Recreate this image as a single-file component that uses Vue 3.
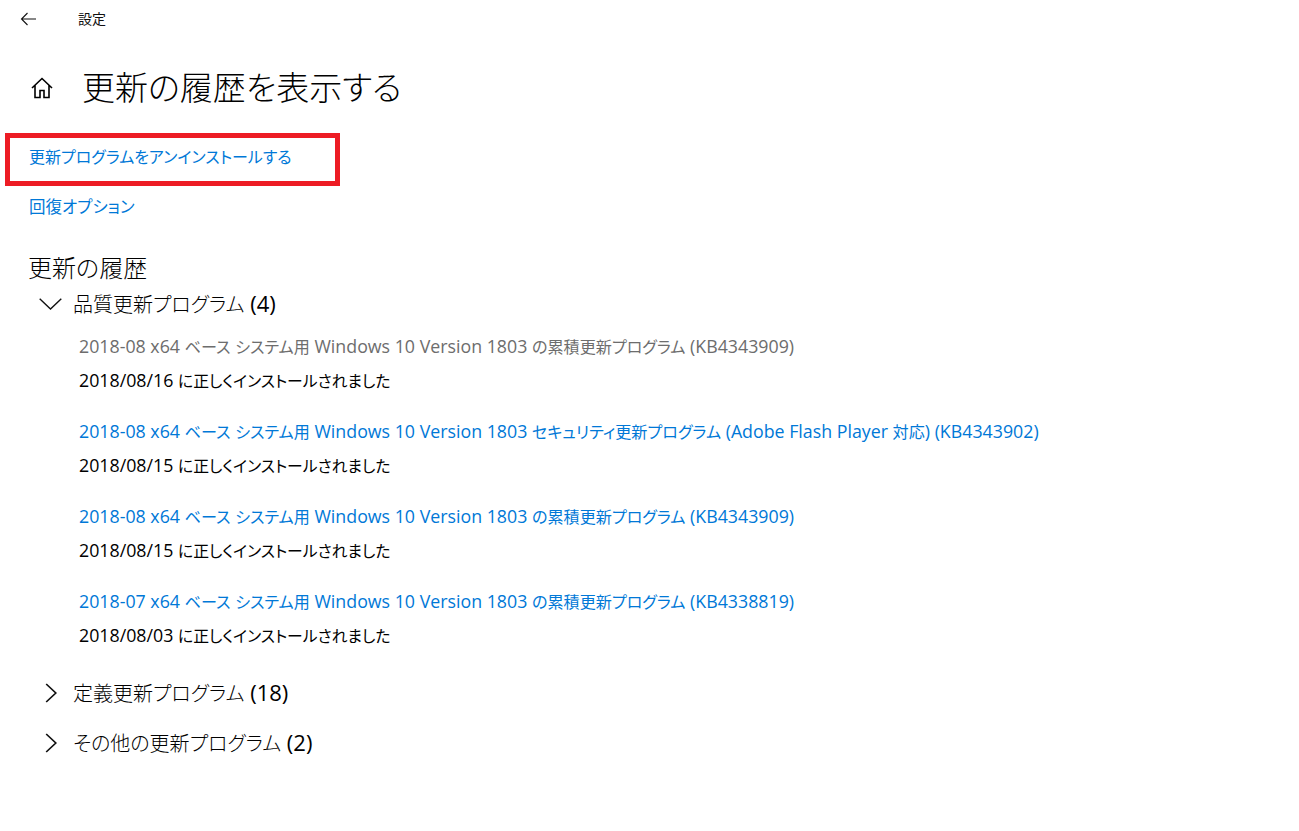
<script setup>
const groups = [
  {
    title: '品質更新プログラム (4)',
    open: true,
    items: [
      { name: '2018-08 x64 ベース システム用 Windows 10 Version 1803 の累積更新プログラム (KB4343909)', date: '2018/08/16 に正しくインストールされました', visited: true },
      { name: '2018-08 x64 ベース システム用 Windows 10 Version 1803 セキュリティ更新プログラム (Adobe Flash Player 対応) (KB4343902)', date: '2018/08/15 に正しくインストールされました' },
      { name: '2018-08 x64 ベース システム用 Windows 10 Version 1803 の累積更新プログラム (KB4343909)', date: '2018/08/15 に正しくインストールされました' },
      { name: '2018-07 x64 ベース システム用 Windows 10 Version 1803 の累積更新プログラム (KB4338819)', date: '2018/08/03 に正しくインストールされました' }
    ]
  },
  { title: '定義更新プログラム (18)', open: false, items: [] },
  { title: 'その他の更新プログラム (2)', open: false, items: [] }
]

// latin runs are set a bit larger than the japanese ones, like the system font does
const runs = (text) => text.match(/[\x20-\x7e]+|[^\x20-\x7e]+/g)
const isLatin = (run) => /^[\x20-\x7e]/.test(run)
</script>

<template>
  <div class="page">
    <div class="topbar">
      <svg class="back" width="16" height="14" viewBox="0 0 16 14">
        <path d="M7.5 1 1.5 7l6 6M1.5 7H16" fill="none" stroke="#111" stroke-width="1.1" />
      </svg>
      <span class="app-name">設定</span>
    </div>

    <div class="title-row">
      <svg class="home" width="24" height="22" viewBox="0 0 24 22">
        <path d="M2 11 12 1.5 22 11M5 8.5V20.5h5V13.5h4v7h5V8.5" fill="none" stroke="#000" stroke-width="1.6" />
      </svg>
      <h1>更新の履歴を表示する</h1>
    </div>

    <div class="highlight">
      <a class="link">更新プログラムをアンインストールする</a>
    </div>
    <a class="link recovery">回復オプション</a>

    <h2>更新の履歴</h2>

    <section v-for="group in groups" :key="group.title" class="group">
      <div class="group-head">
        <svg v-if="group.open" class="chev-down" width="23" height="12" viewBox="0 0 23 12">
          <path d="M.7.7 11.5 11 22.3.7" fill="none" stroke="#111" stroke-width="1.4" />
        </svg>
        <svg v-else class="chev-right" width="12" height="20" viewBox="0 0 12 20">
          <path d="M1.2 1 10.8 10 1.2 19" fill="none" stroke="#111" stroke-width="1.7" />
        </svg>
        <span class="group-title">
          <span v-for="(run, i) in runs(group.title)" :key="i" :class="{ lat: isLatin(run) }">{{ run }}</span>
        </span>
      </div>
      <div v-if="group.open" class="items">
        <div v-for="item in group.items" :key="item.name + item.date" class="item">
          <a class="update" :class="{ visited: item.visited }">
            <span v-for="(run, i) in runs(item.name)" :key="i" :class="{ lat: isLatin(run) }">{{ run }}</span>
          </a>
          <div class="date">
            <span v-for="(run, i) in runs(item.date)" :key="i" :class="{ lat: isLatin(run) }">{{ run }}</span>
          </div>
        </div>
      </div>
    </section>
  </div>
</template>

<style>
html, body {
  margin: 0;
  background: #fff;
}
</style>

<style scoped>
.page {
  height: 831px;
  box-sizing: border-box;
  overflow: hidden;
  font-family: "Open Sans", "Noto Sans CJK JP", sans-serif;
  font-feature-settings: "palt";
  color: #000;
  background: #fff;
}

.topbar {
  display: flex;
  align-items: center;
  height: 38px;
  padding-left: 20px;
}

.back {
  margin-right: 42px;
}

.app-name {
  margin-bottom: 2px;
  font-size: 14px;
  color: #111;
}

.title-row {
  display: flex;
  align-items: center;
  height: 48px;
  margin-top: 26px;
  padding-left: 30px;
}

.home {
  margin-right: 28px;
}

h1 {
  margin: 0;
  font-size: 33px;
  font-weight: 300;
  line-height: 48px;
}

.highlight {
  width: 335px;
  height: 53px;
  box-sizing: border-box;
  margin: 21px 0 0 5px;
  padding: 6px 0 0 19px;
  border: 5px solid #ed1c24;
}

.link {
  display: block;
  font-size: 16px;
  line-height: 26px;
  color: #0078d7;
}

.recovery {
  margin: 8px 0 0 29px;
  font-size: 16.5px;
}

h2 {
  margin: 30px 0 0 28px;
  font-size: 24px;
  font-weight: 300;
  line-height: 36px;
}

.group-head {
  display: flex;
  align-items: center;
  height: 30px;
  padding-left: 39px;
}

.group:first-of-type .group-head {
  margin-top: 3px;
}

.group-title {
  font-size: 20px;
  font-weight: 300;
  line-height: 30px;
}

.lat {
  font-size: 1.1em;
  font-weight: 400;
}

.chev-down {
  margin-right: 11px;
}

.chev-right {
  margin: 0 16px 0 6px;
}

.items {
  padding: 14px 0 0 79px;
}

.item {
  height: 85px;
}

.item:last-child {
  height: 70px;
}

.update {
  display: block;
  font-size: 16.1px;
  line-height: 26px;
  color: #0078d7;
}

.update .lat,
.date .lat {
  font-size: 17.8px;
}

.update.visited {
  color: #6d6d6d;
}

.date {
  margin-top: 7px;
  font-size: 15.8px;
  line-height: 26px;
}

.group + .group {
  margin-top: 20px;
}
</style>
